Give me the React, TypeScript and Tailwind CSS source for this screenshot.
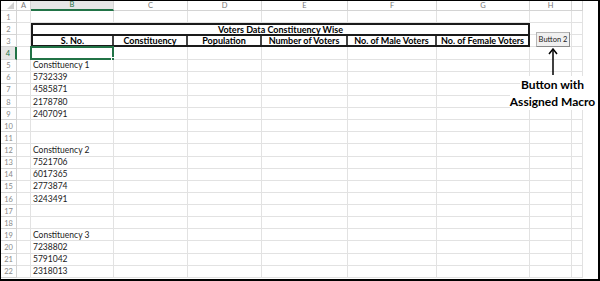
import React from "react";

const colLetters = ["A", "B", "C", "D", "E", "F", "G", "H", ""];

const cellText: Record<number, string> = {
  5: "Constituency 1",
  6: "5732339",
  7: "4585871",
  8: "2178780",
  9: "2407091",
  12: "Constituency 2",
  13: "7521706",
  14: "6017365",
  15: "2773874",
  16: "3243491",
  19: "Constituency 3",
  20: "7238802",
  21: "5791042",
  22: "2318013",
};

const headers = [
  "S. No.",
  "Constituency",
  "Population",
  "Number of Voters",
  "No. of Male Voters",
  "No. of Female Voters",
];

function ColHeader({ letter }: { letter: string }) {
  const selected = letter === "B";
  return (
    <div
      className={
        selected
          ? "flex items-center justify-center border-r border-r-[#d4d4d4] border-b-2 border-b-[#217346] bg-[#e6e6e6] text-[7.5px] text-[#217346]"
          : "flex items-center justify-center border-r border-b border-[#d4d4d4] text-[7.5px] text-[#777]"
      }
    >
      {letter}
    </div>
  );
}

function RowHeader({ n }: { n: number }) {
  const selected = n === 4;
  return (
    <div
      className={
        selected
          ? "flex items-end justify-center border-r-2 border-r-[#217346] border-b border-b-[#d4d4d4] bg-[#e6e6e6] pb-[1px] text-[7.5px] leading-none text-[#217346]"
          : "flex items-end justify-center border-r border-b border-[#d4d4d4] pb-[1px] text-[7.5px] leading-none text-[#888]"
      }
    >
      {n}
    </div>
  );
}

function Cell({ text }: { text?: string }) {
  return (
    <div className="relative flex items-end whitespace-nowrap border-r border-b border-[#e2e2e2] pl-[2px] pb-[1px] text-[8.5px] leading-none text-[#1a1a1a]">
      {text}
    </div>
  );
}

export default function App() {
  const rows: React.ReactNode[] = [];

  rows.push(
    <div key="corner" className="relative border-r border-b border-[#d4d4d4]">
      <svg
        className="absolute right-[2px] bottom-[1px]"
        width="7"
        height="7"
        viewBox="0 0 7 7"
      >
        <polygon points="7,0 7,7 0,7" fill="#d0d0d0" />
      </svg>
    </div>
  );
  colLetters.forEach((l, i) => rows.push(<ColHeader key={"h" + i} letter={l} />));

  for (let r = 1; r <= 22; r++) {
    rows.push(<RowHeader key={"r" + r} n={r} />);
    for (let c = 0; c < 9; c++) {
      const key = `c${r}-${c}`;
      if ((r === 2 || r === 3) && c >= 1 && c <= 6) {
        if (r === 2 && c === 1) {
          rows.push(
            <div
              key="table"
              className="col-span-6 row-span-2 flex flex-col border-2 border-[#1a1a1a] font-bold text-[9px] leading-none text-black"
            >
              <div className="flex flex-1 items-center justify-center border-b-2 border-[#1a1a1a]">
                Voters Data Constituency Wise
              </div>
              <div className="grid flex-1 grid-cols-[81px_74px_74px_86px_89px_91px]">
                {headers.map((h, i) => (
                  <div
                    key={h}
                    className={
                      i < 5
                        ? "flex items-center justify-center whitespace-nowrap border-r-2 border-[#444]"
                        : "flex items-center justify-center whitespace-nowrap"
                    }
                  >
                    {h}
                  </div>
                ))}
              </div>
            </div>
          );
        }
        continue;
      }
      if (r === 4 && c === 1) {
        rows.push(
          <div
            key={key}
            className="relative -ml-[1px] -mt-[1px] border-2 border-[#217346]"
          >
            <div className="absolute -right-[3px] -bottom-[3px] h-[4px] w-[4px] border border-white bg-[#217346]" />
          </div>
        );
        continue;
      }
      rows.push(<Cell key={key} text={c === 1 ? cellText[r] : undefined} />);
    }
  }

  return (
    <div className="relative h-[281px] w-[600px] overflow-hidden border-t border-l border-r-2 border-b-2 border-black bg-white font-['Lato',sans-serif]">
      <div className="grid w-[582px] grid-cols-[16px_14px_83px_74px_74px_86px_89px_93px_42px_11px] grid-rows-[10px_repeat(22,12.136px)]">
        {rows}
      </div>

      {/* Form button */}
      <div className="absolute left-[535px] top-[31px] flex h-[15px] w-[34px] items-center justify-center border border-[#b5b5b5] border-r-[#8a8a8a] border-b-[#8a8a8a] bg-[#f0f0f0] text-[7.5px] leading-none text-[#222]">
        Button 2
      </div>

      {/* Annotation */}
      <div className="absolute left-[506px] top-[47px] flex w-[91px] flex-col items-center">
        <svg width="10" height="27" viewBox="0 0 10 27">
          <line x1="5" y1="1" x2="5" y2="27" stroke="#000" strokeWidth="1.5" />
          <polyline points="1,6 5,1 9,6" fill="none" stroke="#000" strokeWidth="1.5" />
        </svg>
        <div className="mt-[1px] bg-white px-[1px] text-[12px] font-bold leading-[17px] text-black whitespace-nowrap">
          Button with
        </div>
        <div className="bg-white text-[12px] font-bold leading-[17px] text-black whitespace-nowrap">
          Assigned Macro
        </div>
      </div>
    </div>
  );
}
